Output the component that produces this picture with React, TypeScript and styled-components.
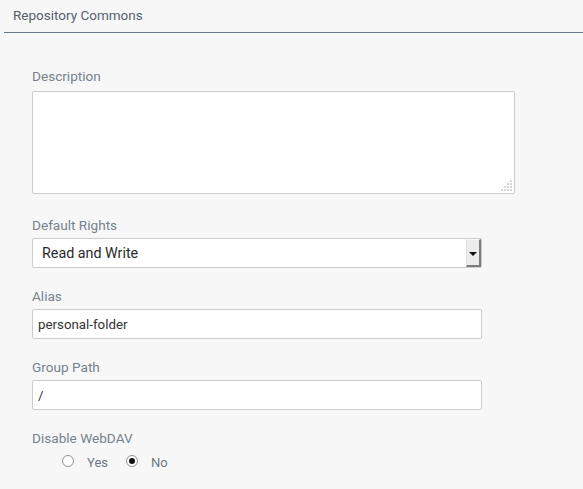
import React from "react";
import styled, { createGlobalStyle } from "styled-components";

const Global = createGlobalStyle`
  html, body { margin: 0; padding: 0; background: #f7f7f7; }
  body { font-family: Roboto, "Noto Sans", sans-serif; }
  * { box-sizing: border-box; }
`;

const Page = styled.div`
  width: 583px;
  height: 489px;
  background: #f7f7f7;
  overflow: hidden;
`;

const Header = styled.div`
  margin-left: 4px;
  height: 33px;
  padding: 7px 0 0 9px;
  border-bottom: 1px solid #6b7788;
  font-size: 13.5px;
  line-height: 16px;
  color: #58606b;
`;

const Form = styled.div`
  padding: 35px 0 0 32px;
  display: flex;
  flex-direction: column;
`;

const Group = styled.div<{ $gap?: number }>`
  display: flex;
  flex-direction: column;
  margin-bottom: ${(p) => p.$gap ?? 20}px;
`;

const Label = styled.div<{ $mb?: number }>`
  font-size: 13.6px;
  line-height: 16px;
  color: #78828d;
  margin-bottom: ${(p) => p.$mb ?? 5}px;
`;

const AreaWrap = styled.div`
  position: relative;
  width: 483px;
  height: 103px;
`;

const TextArea = styled.textarea`
  display: block;
  width: 483px;
  height: 103px;
  margin: 0;
  border: 1px solid #c9ccd1;
  border-radius: 2px;
  background: #fff;
  font-family: Roboto, sans-serif;
  font-size: 13px;
  outline: none;
  resize: none;
`;

const Grip = styled.svg`
  position: absolute;
  right: 2px;
  bottom: 2px;
  width: 12px;
  height: 12px;
  pointer-events: none;
`;

const Select = styled.div`
  width: 450px;
  height: 30px;
  display: flex;
  align-items: stretch;
  border: 1px solid #c9ccd1;
  border-radius: 2px;
  background: #fff;
`;

const SelectText = styled.div`
  flex: 1;
  padding-left: 9px;
  display: flex;
  align-items: center;
  font-size: 14.3px;
  color: #2a2a2a;
`;

const ArrowButton = styled.div`
  width: 15px;
  background: #ececec;
  border-left: 1px solid #e4e4e4;
  border-right: 2px solid #7d7d7d;
  border-bottom: 2px solid #7d7d7d;
  border-top: 1px solid #fafafa;
  display: flex;
  align-items: center;
  justify-content: center;
`;

const Triangle = styled.div`
  width: 0;
  height: 0;
  border-left: 4px solid transparent;
  border-right: 4px solid transparent;
  border-top: 4px solid #111;
  margin-top: 2px;
`;

const Input = styled.input`
  width: 450px;
  height: 30px;
  margin: 0;
  padding: 0 5px;
  border: 1px solid #c9ccd1;
  border-radius: 2px;
  background: #fff;
  font-family: Roboto, sans-serif;
  font-size: 13.3px;
  color: #333;
  outline: none;
`;

const RadioRow = styled.div`
  display: flex;
  align-items: center;
  gap: 18px;
  padding-left: 30px;
  margin-top: 3px;
  height: 16px;
`;

const RadioLabel = styled.label`
  display: flex;
  align-items: center;
  font-size: 13px;
  color: #6d7784;
`;

const RadioCircle = styled.span<{ $checked?: boolean }>`
  width: 12px;
  height: 12px;
  border-radius: 50%;
  border: 1px solid #8f8f8f;
  background: #fff;
  margin-right: 13px;
  margin-top: -3px;
  display: flex;
  align-items: center;
  justify-content: center;
  &::after {
    content: "";
    width: 6px;
    height: 6px;
    border-radius: 50%;
    background: ${(p) => (p.$checked ? "#111" : "transparent")};
  }
`;

const gripDots: Array<[number, number]> = [];
for (let r = 0; r < 4; r++) {
  for (let c = 3 - r; c < 4; c++) {
    gripDots.push([c * 3 + 1, r * 3 + 1]);
  }
}

export default function App() {
  return (
    <Page>
      <Global />
      <Header>Repository Commons</Header>
      <Form>
        <Group $gap={23}>
          <Label $mb={7}>Description</Label>
          <AreaWrap>
            <TextArea />
            <Grip viewBox="0 0 12 12">
              {gripDots.map(([x, y], i) => (
                <rect key={i} x={x - 0.5} y={y - 0.5} width="1" height="1" fill="#666" />
              ))}
            </Grip>
          </AreaWrap>
        </Group>
        <Group>
          <Label>Default Rights</Label>
          <Select>
            <SelectText>Read and Write</SelectText>
            <ArrowButton>
              <Triangle />
            </ArrowButton>
          </Select>
        </Group>
        <Group>
          <Label>Alias</Label>
          <Input defaultValue="personal-folder" />
        </Group>
        <Group>
          <Label>Group Path</Label>
          <Input defaultValue="/" />
        </Group>
        <Group>
          <Label>Disable WebDAV</Label>
          <RadioRow>
            <RadioLabel>
              <RadioCircle />
              Yes
            </RadioLabel>
            <RadioLabel>
              <RadioCircle $checked />
              No
            </RadioLabel>
          </RadioRow>
        </Group>
      </Form>
    </Page>
  );
}
